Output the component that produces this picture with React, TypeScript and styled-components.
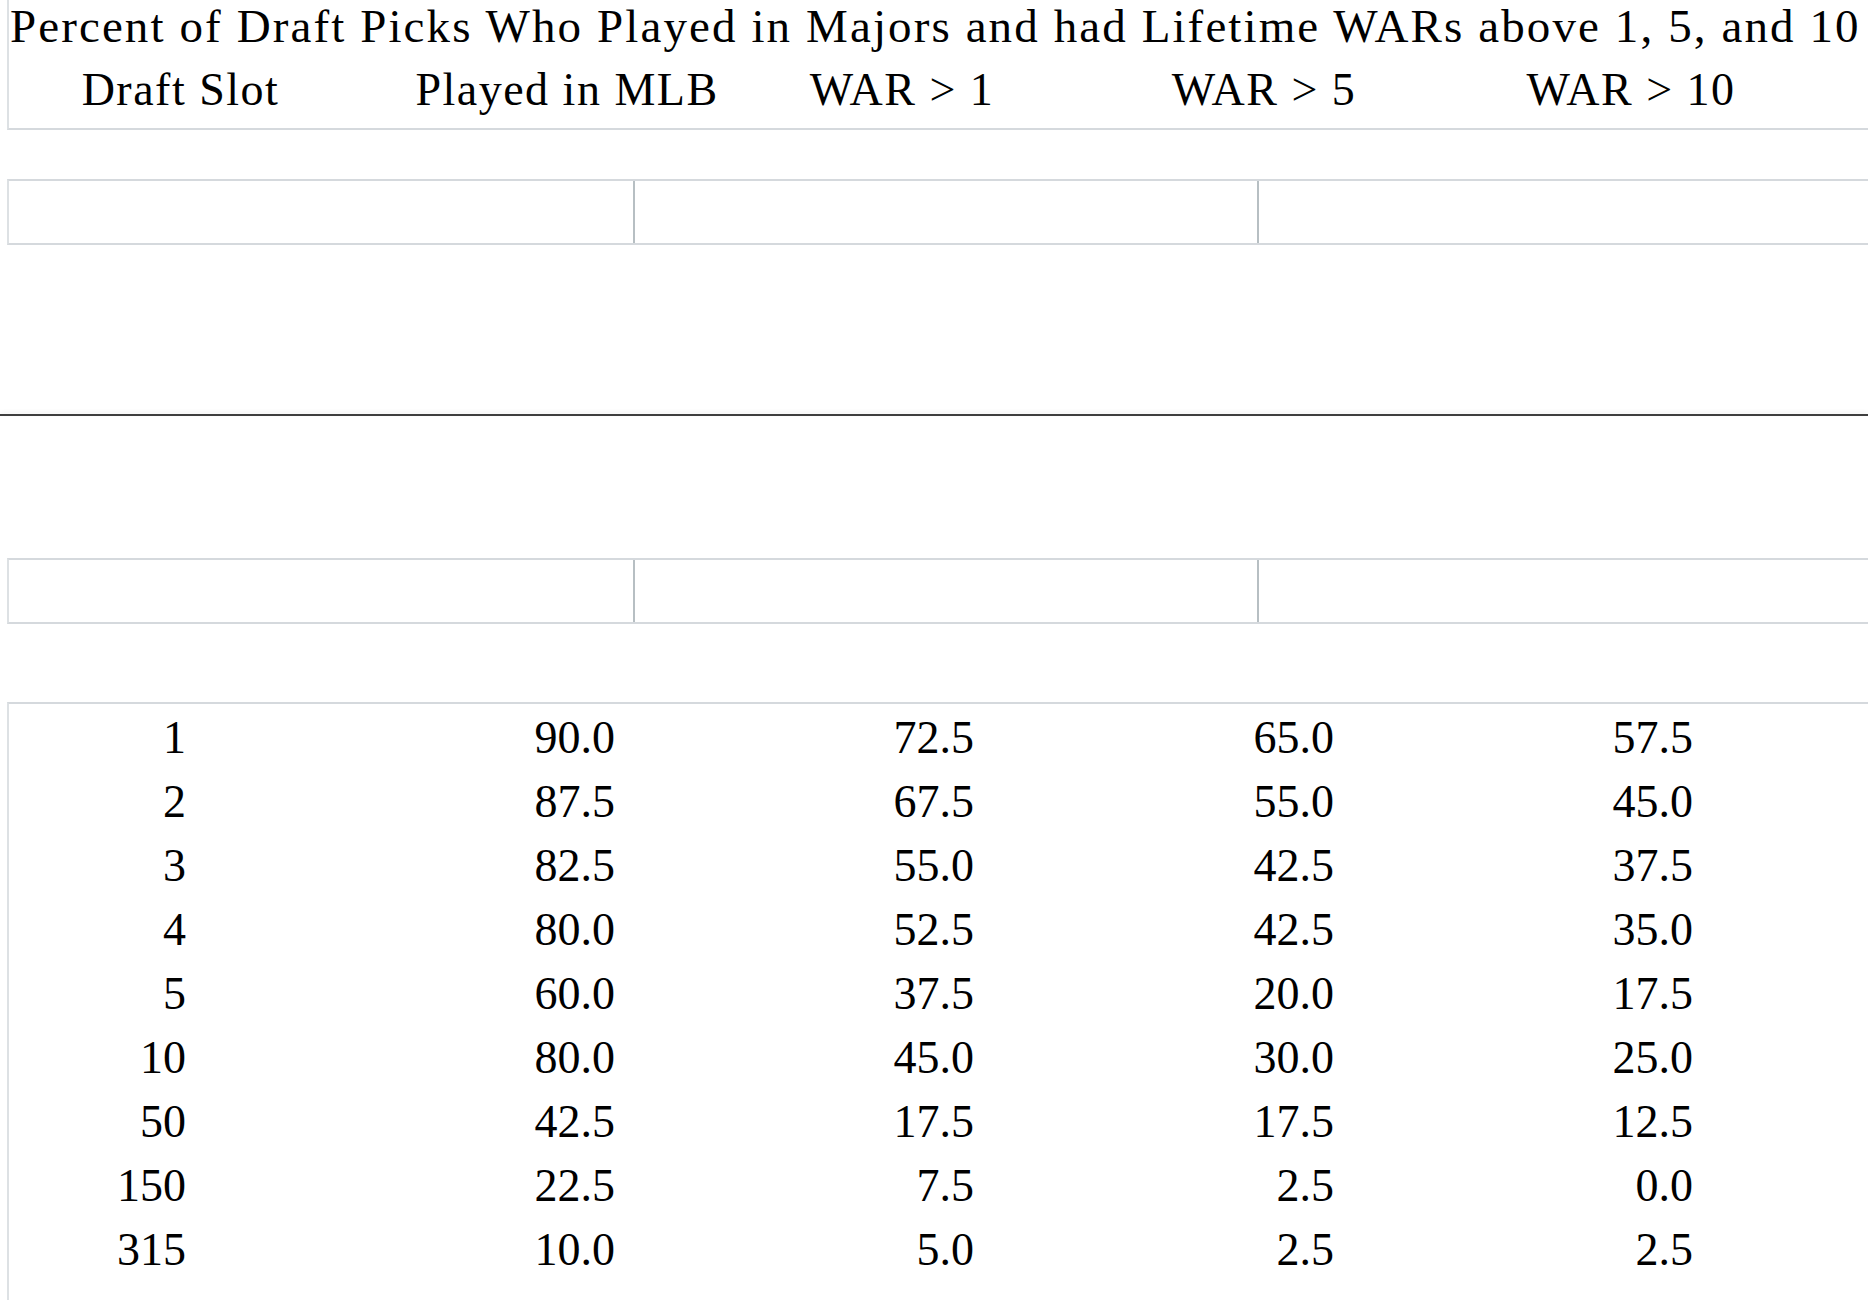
import React from "react";
import styled, { createGlobalStyle } from "styled-components";

const Global = createGlobalStyle`
  html, body {
    margin: 0;
    padding: 0;
    background: #ffffff;
    overflow: hidden;
  }
  body {
    font-family: "Liberation Serif", "Times New Roman", serif;
    color: #000;
  }
`;

const Page = styled.div`
  display: flex;
  flex-direction: column;
  width: 1868px;
`;

const HeaderBox = styled.section`
  margin-left: 7px;
  border-left: 2px solid #dde1e4;
  border-bottom: 2px solid #d5d9dd;
  padding: 0 0 7px 1px;
`;

const Title = styled.h1`
  margin: 0;
  font-weight: 400;
  font-size: 47px;
  line-height: 53px;
  letter-spacing: 2.1px;
  white-space: nowrap;
`;

const HeaderRow = styled.div`
  display: grid;
  grid-template-columns: 341px 432px 238px 486px 248px;
  padding-top: 5px;
  font-size: 46px;
  line-height: 63px;
  letter-spacing: 1.5px;
  white-space: nowrap;
`;

const HeaderCell = styled.div`
  text-align: center;
`;

const EmptyGrid = styled.div<{ $top: number }>`
  margin-top: ${(p) => p.$top}px;
  margin-left: 7px;
  display: grid;
  grid-template-columns: 626px 624px 1fr;
  height: 62px;
  border-top: 2px solid #d5d9dd;
  border-bottom: 2px solid #d5d9dd;
  border-left: 2px solid #dde1e4;
`;

const EmptyCell = styled.div<{ $last?: boolean }>`
  border-right: ${(p) => (p.$last ? "none" : "2px solid #b7bfc3")};
`;

const Rule = styled.hr`
  margin: 169px 0 0 0;
  border: none;
  height: 2px;
  background: #3f3f3f;
  box-shadow: 0 -2px 4px rgba(0, 0, 0, 0.07);
`;

const DataTable = styled.div`
  margin-top: 78px;
  margin-left: 7px;
  border-top: 2px solid #d5d9dd;
  border-left: 2px solid #dde1e4;
  padding: 2px 0 40px 0;
`;

const DataRow = styled.div`
  display: grid;
  grid-template-columns: 177px 429px 359px 360px 359px;
  font-size: 46px;
  line-height: 64px;
`;

const Num = styled.div`
  text-align: right;
`;

const headers = ["Draft Slot", "Played in MLB", "WAR > 1", "WAR > 5", "WAR > 10"];

const rows: string[][] = [
  ["1", "90.0", "72.5", "65.0", "57.5"],
  ["2", "87.5", "67.5", "55.0", "45.0"],
  ["3", "82.5", "55.0", "42.5", "37.5"],
  ["4", "80.0", "52.5", "42.5", "35.0"],
  ["5", "60.0", "37.5", "20.0", "17.5"],
  ["10", "80.0", "45.0", "30.0", "25.0"],
  ["50", "42.5", "17.5", "17.5", "12.5"],
  ["150", "22.5", "7.5", "2.5", "0.0"],
  ["315", "10.0", "5.0", "2.5", "2.5"],
];

export default function App() {
  return (
    <>
      <Global />
      <Page>
        <HeaderBox>
          <Title>
            Percent of Draft Picks Who Played in Majors and had Lifetime WARs above 1, 5, and 10
          </Title>
          <HeaderRow>
            {headers.map((h) => (
              <HeaderCell key={h}>{h}</HeaderCell>
            ))}
          </HeaderRow>
        </HeaderBox>

        <EmptyGrid $top={49}>
          <EmptyCell />
          <EmptyCell />
          <EmptyCell $last />
        </EmptyGrid>

        <Rule />

        <EmptyGrid $top={142}>
          <EmptyCell />
          <EmptyCell />
          <EmptyCell $last />
        </EmptyGrid>

        <DataTable>
          {rows.map((r) => (
            <DataRow key={r[0]}>
              {r.map((v, i) => (
                <Num key={i}>{v}</Num>
              ))}
            </DataRow>
          ))}
        </DataTable>
      </Page>
    </>
  );
}
